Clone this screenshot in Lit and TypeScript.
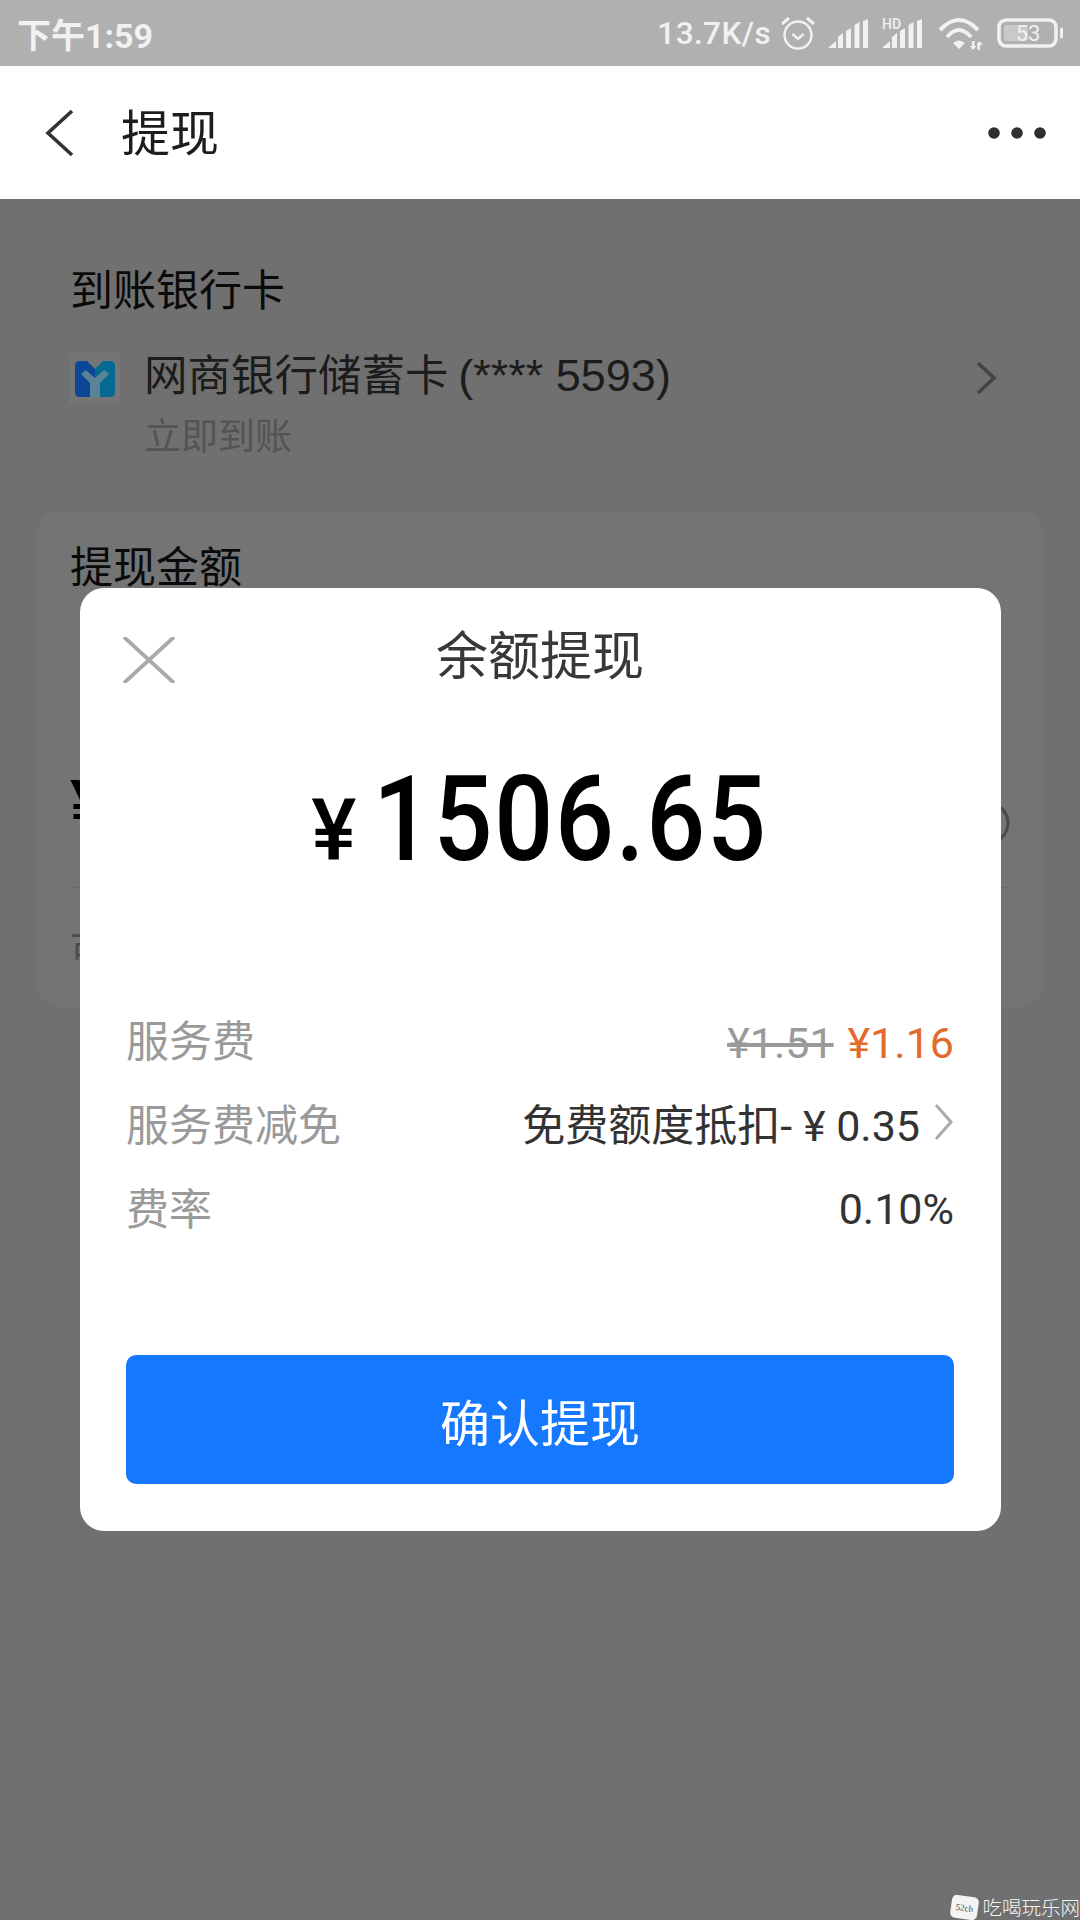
import { LitElement, css, html, svg } from "lit";
import { customElement } from "lit/decorators.js";

const signalBars = svg`
  <path d="M0 29 L8 22 V29 Z" />
  <path d="M10 29 V18 L15 14 V29 Z" />
  <path d="M18 29 V12 L23 9 V29 Z" />
  <path d="M26.5 29 V6 L31.5 3 V29 Z" />
  <path d="M35 29 V2 L40 0 V29 Z" />
`;

@customElement("app-root")
class AppRoot extends LitElement {
  static styles = css`
    :host {
      display: block;
      position: relative;
      width: 1080px;
      height: 1920px;
      overflow: hidden;
      background: #707070;
      font-family: "Noto Sans CJK SC", "Roboto", sans-serif;
    }

    .status {
      display: flex;
      align-items: center;
      height: 66px;
      padding: 0 17px 0 17px;
      background: #b0b0b0;
      color: #f1f1f1;
      box-sizing: border-box;
    }
    .status .time {
      font-family: "Roboto", "Noto Sans CJK SC", sans-serif;
      font-size: 34px;
      font-weight: 700;
      flex-grow: 1;
    }
    .status .speed {
      font-family: "Roboto", sans-serif;
      font-size: 31.5px;
      font-weight: 500;
      letter-spacing: 0.4px;
      margin-right: 10px;
    }
    .status svg {
      display: block;
      fill: #f1f1f1;
    }
    .status .alarm {
      margin-right: 13px;
    }
    .status .sig {
      margin-right: 14px;
    }
    .status .hd {
      margin-right: 16px;
    }
    .status .wifi {
      margin-right: 13px;
    }

    .nav {
      display: flex;
      align-items: center;
      height: 133px;
      background: #fff;
      padding: 0 34px 0 45px;
      box-sizing: border-box;
    }
    .nav .back {
      display: block;
      margin-right: 46px;
    }
    .nav h1 {
      margin: -6px 0 0;
      flex-grow: 1;
      font-size: 49px;
      font-weight: 400;
      color: #1d1d1d;
      line-height: 1;
    }
    .nav .more {
      display: block;
    }

    .content {
      padding: 58px 36px 0;
    }
    .section-title {
      padding-left: 34px;
      font-size: 43px;
      line-height: 60px;
      color: #0a0a0a;
    }
    .bank {
      display: flex;
      gap: 24px;
      margin: 26px 0 0 33px;
    }
    .bank-logo {
      display: flex;
      align-items: center;
      justify-content: center;
      width: 51px;
      height: 51px;
      margin-top: 10px;
      background: #757575;
      flex: none;
    }
    .bank-text {
      flex-grow: 1;
    }
    .bank-name {
      font-size: 43.5px;
      line-height: 60px;
      color: #1c1c1c;
    }
    .bank-name .num {
      font-family: "Liberation Sans", sans-serif;
      font-size: 45px;
    }
    .bank-sub {
      margin-top: 3px;
      font-size: 37px;
      line-height: 50px;
      color: #545454;
    }
    .bank-arrow {
      display: block;
      margin: 18px 47px 0 0;
    }

    .panel {
      margin-top: 52px;
      height: 496px;
      padding: 23px 34px 0;
      box-sizing: border-box;
      background: #747474;
      border-radius: 24px;
    }
    .panel-title {
      font-size: 43px;
      line-height: 60px;
      color: #0a0a0a;
    }
    .input {
      display: flex;
      align-items: center;
      justify-content: space-between;
      height: 82px;
      margin-top: 171px;
      font-family: "Roboto", sans-serif;
      font-size: 68px;
      font-weight: 500;
      color: #000;
    }
    .input svg {
      margin-top: 34px;
    }
    .panel-line {
      height: 1px;
      margin-top: 40px;
      background: #6a6a6a;
    }
    .panel-note {
      margin-top: 34px;
      font-size: 36px;
      line-height: 50px;
      color: #4c4c4c;
    }

    .dialog {
      position: absolute;
      left: 80px;
      top: 588px;
      width: 921px;
      height: 943px;
      box-sizing: border-box;
      padding: 0 47px 0 46px;
      background: #fff;
      border-radius: 24px;
      display: flex;
      flex-direction: column;
    }
    .dialog-head {
      position: relative;
      display: flex;
      justify-content: center;
      align-items: center;
      height: 130px;
    }
    .dialog-head h2 {
      margin: 0;
      font-size: 52px;
      font-weight: 400;
      color: #383838;
      line-height: 1;
    }
    .dialog-head .close {
      position: absolute;
      left: -3px;
      top: 49px;
    }
    .amount {
      display: flex;
      align-items: baseline;
      justify-content: center;
      margin-top: 27px;
      font-family: "Roboto", sans-serif;
      font-weight: 500;
      color: #000;
      height: 150px;
      line-height: 150px;
    }
    .amount .cur {
      font-size: 85px;
      margin-right: 16px;
    }
    .amount .val {
      display: inline-block;
      font-size: 118px;
      letter-spacing: 1.9px;
      margin: 0 -26px;
      transform: scaleX(0.88);
    }
    .rows {
      display: flex;
      flex-direction: column;
      margin-top: 101px;
    }
    .row {
      display: flex;
      align-items: center;
      justify-content: space-between;
      height: 84px;
      font-size: 43px;
    }
    .row .label {
      color: #9a9a9a;
    }
    .row .value {
      display: flex;
      align-items: center;
      color: #333;
      font-family: "Roboto", "Noto Sans CJK SC", sans-serif;
    }
    .row .value.num {
      padding-top: 6px;
    }
    .row .value.fees {
      padding-top: 10px;
    }
    .row .old {
      color: #9a9a9a;
      text-decoration: line-through;
      margin-right: 14px;
    }
    .row .fee {
      color: #e26a2b;
    }
    .row .chev {
      display: block;
      margin-left: 14px;
    }
    .confirm {
      display: flex;
      align-items: center;
      justify-content: center;
      height: 129px;
      margin-top: auto;
      margin-bottom: 47px;
      background: #1677ff;
      border-radius: 10px;
      color: #fff;
      font-size: 50px;
    }

    .mark {
      position: absolute;
      right: 0;
      bottom: 1px;
      display: flex;
      align-items: center;
      gap: 4px;
      color: #f4f4f4;
      font-size: 19.5px;
      font-weight: 300;
      line-height: 24px;
    }
    .mark .bubble {
      display: flex;
      align-items: center;
      justify-content: center;
      width: 27px;
      height: 23px;
      border-radius: 5px;
      background: #f4f4f4;
      color: #444;
      font-size: 9px;
      font-family: "Liberation Serif", serif;
      transform: rotate(8deg);
    }
  `;

  render() {
    return html`
      <div class="status">
        <span class="time">下午1:59</span>
        <span class="speed">13.7K/s</span>
        <svg class="alarm" width="34" height="34" viewBox="0 0 34 34">
          <circle cx="17" cy="19" r="13.5" fill="none" stroke="#f1f1f1" stroke-width="2.4" />
          <path d="M11.5 18 L17 23 L22.5 18" fill="none" stroke="#f1f1f1" stroke-width="2.4" />
          <path d="M1 8 L8 2" stroke="#f1f1f1" stroke-width="3" />
          <path d="M33 8 L26 2" stroke="#f1f1f1" stroke-width="3" />
        </svg>
        <svg class="sig" width="40" height="29" viewBox="0 0 40 29">${signalBars}</svg>
        <svg class="hd" width="40" height="36" viewBox="0 -3 40 36">
          <g transform="translate(0 1)">${signalBars}</g>
          <text x="0" y="10.5" font-family="Roboto" font-size="14" font-weight="500" fill="#f1f1f1">HD</text>
        </svg>
        <svg class="wifi" width="46" height="33" viewBox="0 0 46 33">
          <path d="M2 13 Q21 -7 40 13" fill="none" stroke="#f1f1f1" stroke-width="4" />
          <path d="M9 20 Q21 6 33 20" fill="none" stroke="#f1f1f1" stroke-width="4" />
          <path d="M15 26 Q21 21 27 26 L21 32 Z" />
          <path d="M34 24 H36.5 V29 H38.5 L35 33 L32 29 H34 Z" />
          <path d="M42 33 H39.5 V28 H38.5 L41 24 L45 28 H42 Z" />
        </svg>
        <svg width="66" height="32" viewBox="0 0 66 32">
          <rect x="2" y="3" width="57" height="26" rx="7" fill="none" stroke="#f1f1f1" stroke-width="3.6" />
          <rect x="7" y="8" width="24" height="16" rx="2" fill="#c9c9c9" />
          <rect x="63" y="10.5" width="3" height="11" rx="1.5" />
          <text x="31" y="24" text-anchor="middle" font-family="Roboto" font-size="22" fill="#f1f1f1">53</text>
        </svg>
      </div>

      <div class="nav">
        <svg class="back" width="30" height="50" viewBox="0 0 30 50">
          <path d="M27 3 L3 25 L27 47" fill="none" stroke="#333" stroke-width="3.6" />
        </svg>
        <h1>提现</h1>
        <svg class="more" width="58" height="14" viewBox="0 0 58 14">
          <circle cx="6" cy="7" r="5.8" fill="#2f2f2f" />
          <circle cx="29" cy="7" r="5.8" fill="#2f2f2f" />
          <circle cx="52" cy="7" r="5.8" fill="#2f2f2f" />
        </svg>
      </div>

      <div class="content">
        <div class="section-title">到账银行卡</div>
        <div class="bank">
          <div class="bank-logo">
            <svg width="40" height="36" viewBox="0 0 40 36">
              <path d="M0 5 Q0 0 5 0 H12 L20 8 V36 H5 Q0 36 0 31 Z" fill="#0c4795" />
              <path d="M40 5 Q40 0 35 0 H28 L20 8 V36 H35 Q40 36 40 31 Z" fill="#056a92" />
              <path d="M6 13 L11 9 L20 17 L29 9 L34 13 L25 22 V36 H15 V22 Z" fill="#5b8296" />
            </svg>
          </div>
          <div class="bank-text">
            <div class="bank-name">网商银行储蓄卡 <span class="num">(**** 5593)</span></div>
            <div class="bank-sub">立即到账</div>
          </div>
          <svg class="bank-arrow" width="22" height="34" viewBox="0 0 22 34">
            <path d="M3 2 L19 17 L3 32" fill="none" stroke="#444" stroke-width="3.6" />
          </svg>
        </div>

        <div class="panel">
          <div class="panel-title">提现金额</div>
          <div class="input">
            <span>¥</span>
            <svg width="44" height="44" viewBox="0 0 44 44">
              <circle cx="22" cy="22" r="20" fill="none" stroke="#4a4a4a" stroke-width="3" />
            </svg>
          </div>
          <div class="panel-line"></div>
          <div class="panel-note">可提现</div>
        </div>
      </div>

      <div class="dialog">
        <div class="dialog-head">
          <svg class="close" width="52" height="46" viewBox="0 0 52 46">
            <path d="M1 0 L51 46 M51 0 L1 46" fill="none" stroke="#aaa" stroke-width="3.8" />
          </svg>
          <h2>余额提现</h2>
        </div>
        <div class="amount"><span class="cur">¥</span><span class="val">1506.65</span></div>
        <div class="rows">
          <div class="row">
            <span class="label">服务费</span>
            <span class="value fees"><span class="old">¥1.51</span><span class="fee">¥1.16</span></span>
          </div>
          <div class="row">
            <span class="label">服务费减免</span>
            <span class="value">免费额度抵扣- ¥ 0.35
              <svg class="chev" width="20" height="36" viewBox="0 0 20 36">
                <path d="M2 1 L17 18 L2 35" fill="none" stroke="#aaa" stroke-width="3" />
              </svg>
            </span>
          </div>
          <div class="row">
            <span class="label">费率</span>
            <span class="value num">0.10%</span>
          </div>
        </div>
        <div class="confirm">确认提现</div>
      </div>

      <div class="mark">
        <span class="bubble">52ch</span>
        <span>吃喝玩乐网</span>
      </div>
    `;
  }
}

export default AppRoot;
